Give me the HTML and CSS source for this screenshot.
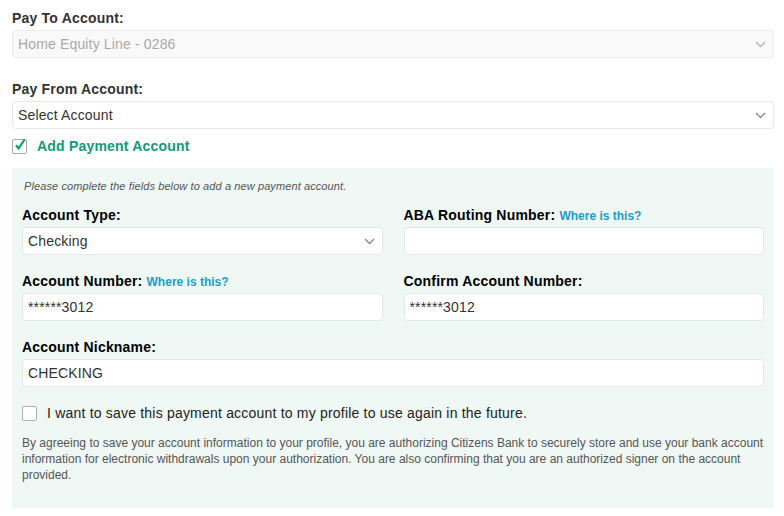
FILE: index.html
```html
<!DOCTYPE html>
<html>
<head>
  <title>Make a Payment</title>
  <link rel="stylesheet" href="styles.css">
</head>
<body>
  <div class="page">
    <div class="field">
      <div class="label">Pay To Account:</div>
      <div class="select disabled">
        <span>Home Equity Line - 0286</span>
        <svg class="chev" width="11" height="7" viewBox="0 0 11 7"><path d="M1 1l4.5 4.5L10 1" fill="none" stroke="#b5b5b5" stroke-width="1.4"/></svg>
      </div>
    </div>

    <div class="field">
      <div class="label">Pay From Account:</div>
      <div class="select">
        <span>Select Account</span>
        <svg class="chev" width="11" height="7" viewBox="0 0 11 7"><path d="M1 1l4.5 4.5L10 1" fill="none" stroke="#8a8a8a" stroke-width="1.4"/></svg>
      </div>
    </div>

    <div class="check-row add-row">
      <span class="box">
        <svg width="14" height="14" viewBox="0 0 14 14"><path d="M3 7.2l2.6 3.2L11.6 1.5" fill="none" stroke="#129b76" stroke-width="2.2"/></svg>
      </span>
      <span class="add-text">Add Payment Account</span>
    </div>

    <div class="panel">
      <div class="note">Please complete the fields below to add a new payment account.</div>

      <div class="grid">
        <div class="field">
          <div class="label">Account Type:</div>
          <div class="select">
            <span>Checking</span>
            <svg class="chev" width="11" height="7" viewBox="0 0 11 7"><path d="M1 1l4.5 4.5L10 1" fill="none" stroke="#8a8a8a" stroke-width="1.4"/></svg>
          </div>
        </div>
        <div class="field">
          <div class="label">ABA Routing Number: <a class="help" href="#">Where is this?</a></div>
          <div class="input"></div>
        </div>
        <div class="field">
          <div class="label">Account Number: <a class="help" href="#">Where is this?</a></div>
          <div class="input">******3012</div>
        </div>
        <div class="field">
          <div class="label">Confirm Account Number:</div>
          <div class="input">******3012</div>
        </div>
        <div class="field wide">
          <div class="label">Account Nickname:</div>
          <div class="input">CHECKING</div>
        </div>
      </div>

      <div class="check-row save-row">
        <span class="box"></span>
        <span>I want to save this payment account to my profile to use again in the future.</span>
      </div>

      <p class="disclaimer">By agreeing to save your account information to your profile, you are authorizing Citizens Bank to securely store and use your bank account information for electronic withdrawals upon your authorization. You are also confirming that you are an authorized signer on the account provided.</p>
    </div>
  </div>
</body>
</html>
```

FILE: styles.css
```css
body {
  margin: 0;
  background: #fff;
  font-family: "Liberation Sans", Arial, sans-serif;
  color: #333;
}

.page {
  width: 762px;
  padding: 8px 0 0 12px;
}

.field {
  margin-bottom: 21px;
}

.label {
  font-size: 14px;
  font-weight: bold;
  line-height: 20px;
  letter-spacing: 0.2px;
  margin-bottom: 2px;
  color: #333;
}

.select,
.input {
  position: relative;
  box-sizing: border-box;
  height: 28px;
  border: 1px solid #e6e6e6;
  border-radius: 4px;
  background: #fff;
  padding: 0 5px;
  font-size: 14px;
  line-height: 26px;
  letter-spacing: 0.15px;
  color: #333;
}

.select.disabled {
  background: #f9f9f9;
  border-color: #ececec;
  color: #a9a9a9;
}

.chev {
  position: absolute;
  right: 7px;
  top: 10px;
}

.check-row {
  display: flex;
  align-items: center;
  height: 20px;
  font-size: 14px;
  letter-spacing: 0.2px;
}

.add-row {
  margin-top: -14px;
}

.box {
  box-sizing: border-box;
  width: 15px;
  height: 15px;
  border: 1px solid #a8a8a8;
  border-radius: 2px;
  background: #fff;
  position: relative;
}

.box svg {
  position: absolute;
  left: 0;
  top: -2px;
}

.add-text {
  margin-left: 10px;
  font-weight: bold;
  color: #129b76;
}

.panel {
  margin-top: 12px;
  background: #eff8f5;
  padding: 10px 10px 25px 10px;
  height: 305px;
}

.note {
  font-size: 11px;
  font-style: italic;
  line-height: 16px;
  letter-spacing: 0.1px;
  color: #555;
  padding-left: 2px;
  margin-bottom: 11px;
}

.grid {
  display: grid;
  grid-template-columns: 1fr 1fr;
  column-gap: 21px;
}

.grid .field {
  margin-bottom: 16px;
}

.grid .label {
  color: #000;
}

.grid .wide {
  grid-column: 1 / 3;
  margin-bottom: 0;
}

.help {
  font-size: 12px;
  line-height: 1;
  letter-spacing: 0;
  color: #1d9dc6;
  text-decoration: none;
}

.save-row {
  margin-top: 16px;
  color: #222;
}

.save-row .box {
  border-color: #b0b0b0;
  margin-right: 10px;
}

.disclaimer {
  margin: 12px 0 0;
  font-size: 12px;
  line-height: 16px;
  color: #555;
}
```
